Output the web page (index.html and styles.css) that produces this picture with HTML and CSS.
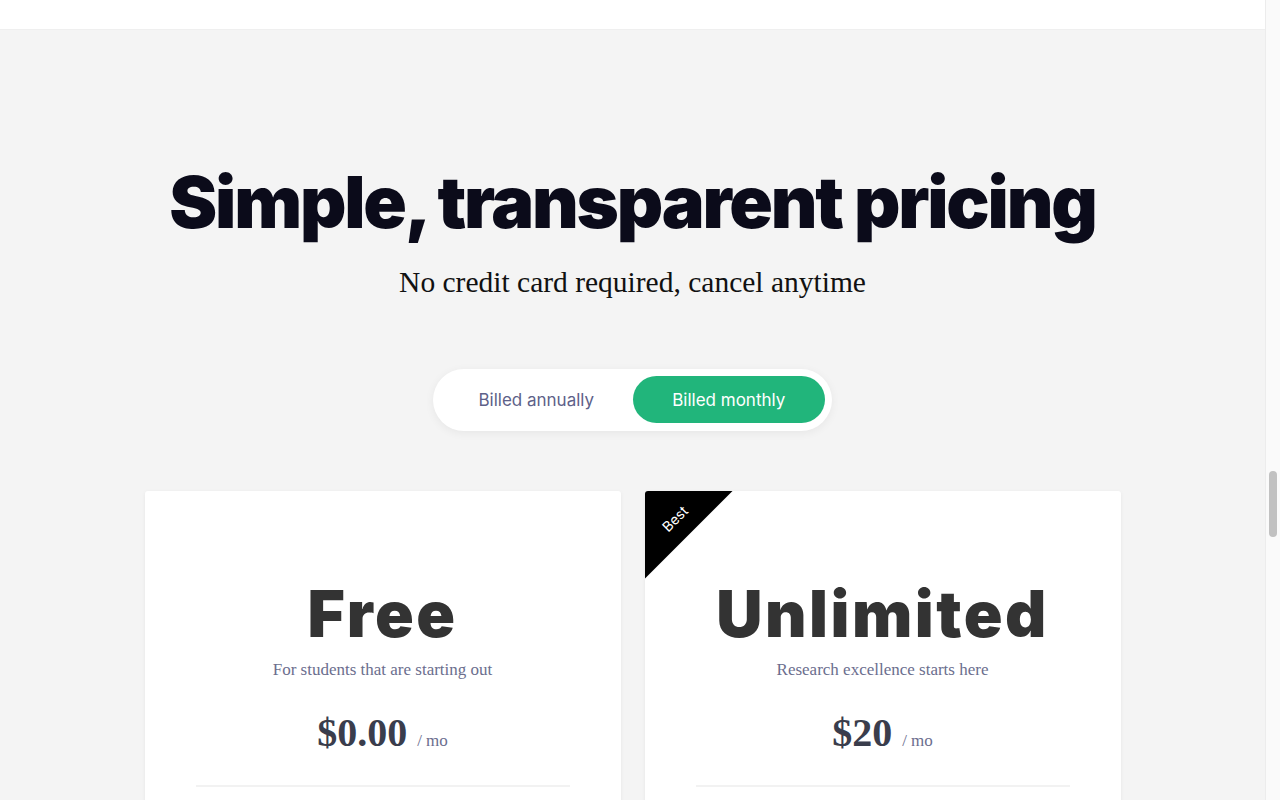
FILE: index.html
```html
<!DOCTYPE html>
<html lang="en">
<head>
<meta charset="utf-8">
<title>Pricing</title>
<link rel="stylesheet" href="styles.css">
</head>
<body>
<div class="page">
  <header class="topbar"></header>
  <main class="pricing">
    <h1 class="title">Simple, transparent pricing</h1>
    <p class="lead">No credit card required, cancel anytime</p>
    <div class="toggle">
      <button class="toggle-opt">Billed annually</button>
      <button class="toggle-opt active">Billed monthly</button>
    </div>
    <div class="cards">
      <section class="card">
        <h2 class="plan">Free</h2>
        <p class="plan-desc">For students that are starting out</p>
        <div class="price"><span class="amount">$0.00</span><span class="per">/ mo</span></div>
        <hr class="divider">
      </section>
      <section class="card">
        <div class="ribbon"><span class="ribbon-text">Best</span></div>
        <h2 class="plan">Unlimited</h2>
        <p class="plan-desc">Research excellence starts here</p>
        <div class="price"><span class="amount">$20</span><span class="per">/ mo</span></div>
        <hr class="divider">
      </section>
    </div>
  </main>
</div>
<div class="scrollbar"><div class="thumb"></div></div>
</body>
</html>
```

FILE: styles.css
```css
html, body {
  margin: 0;
  padding: 0;
  overflow: hidden;
  height: 100%;
}
body {
  background: #f4f4f4;
  font-family: "Inter", "Noto Sans", sans-serif;
}
.page {
  margin-right: 15px;
}
.topbar {
  height: 30px;
  background: #ffffff;
  border-bottom: 1px solid #efefef;
  box-sizing: border-box;
}
.pricing {
  display: flex;
  flex-direction: column;
  align-items: center;
  padding-top: 132px;
}
.title {
  margin: 0;
  font-family: "Inter", sans-serif;
  font-weight: 900;
  font-size: 72px;
  line-height: 80px;
  letter-spacing: -2.2px;
  color: #0b0b1a;
}
.lead {
  margin: 23px 0 0;
  font-family: "Liberation Serif", serif;
  font-size: 29.5px;
  line-height: 34px;
  color: #111111;
}
.toggle {
  margin-top: 70px;
  display: flex;
  width: 399px;
  height: 62px;
  box-sizing: border-box;
  padding: 7px 7px 8px;
  background: #ffffff;
  border-radius: 31px;
  box-shadow: 0 2px 10px rgba(0, 0, 0, 0.06);
}
.toggle-opt {
  flex: 1;
  border: 0;
  background: transparent;
  border-radius: 24px;
  font-family: "Inter", sans-serif;
  font-size: 17px;
  color: #5d6189;
  padding: 0;
}
.toggle-opt.active {
  background: #21b57b;
  color: #ffffff;
}
.cards {
  margin-top: 60px;
  display: flex;
  gap: 24px;
}
.card {
  position: relative;
  width: 476px;
  height: 600px;
  box-sizing: border-box;
  padding: 85px 51px 0;
  background: #ffffff;
  border-radius: 3px;
  box-shadow: 0 1px 4px rgba(0, 0, 0, 0.06);
  display: flex;
  flex-direction: column;
  align-items: center;
  overflow: hidden;
}
.plan {
  margin: 0;
  font-family: "Inter", sans-serif;
  font-weight: 900;
  font-size: 64px;
  line-height: 76px;
  letter-spacing: 2.5px;
  color: #333333;
}
.plan-desc {
  margin: 7px 0 0;
  font-family: "Liberation Serif", serif;
  font-size: 17px;
  line-height: 22px;
  color: #6b6e8e;
}
.price {
  margin-top: 28px;
  display: flex;
  align-items: baseline;
  gap: 10px;
}
.amount {
  font-family: "Liberation Serif", serif;
  font-weight: 700;
  font-size: 40px;
  line-height: 48px;
  color: #3a3d4c;
}
.per {
  font-family: "Liberation Serif", serif;
  font-size: 17px;
  color: #6b6e8e;
}
.divider {
  align-self: stretch;
  margin: 28px 0 0;
  border: 0;
  border-top: 2px solid #f2f2f2;
}
.ribbon {
  position: absolute;
  top: 0;
  left: 0;
  width: 88px;
  height: 88px;
  background: #000000;
  clip-path: polygon(0 0, 100% 0, 0 100%);
}
.ribbon-text {
  position: absolute;
  left: 15px;
  top: 19px;
  transform: rotate(-45deg);
  font-family: "Inter", sans-serif;
  font-size: 14px;
  color: #ffffff;
}
.scrollbar {
  position: fixed;
  top: 0;
  right: 0;
  width: 15px;
  height: 100%;
  background: #fafafa;
  border-left: 1px solid #ececec;
  box-sizing: border-box;
}
.thumb {
  position: absolute;
  left: 3px;
  top: 471px;
  width: 8px;
  height: 66px;
  border-radius: 4px;
  background: #c1c1c1;
}
```
